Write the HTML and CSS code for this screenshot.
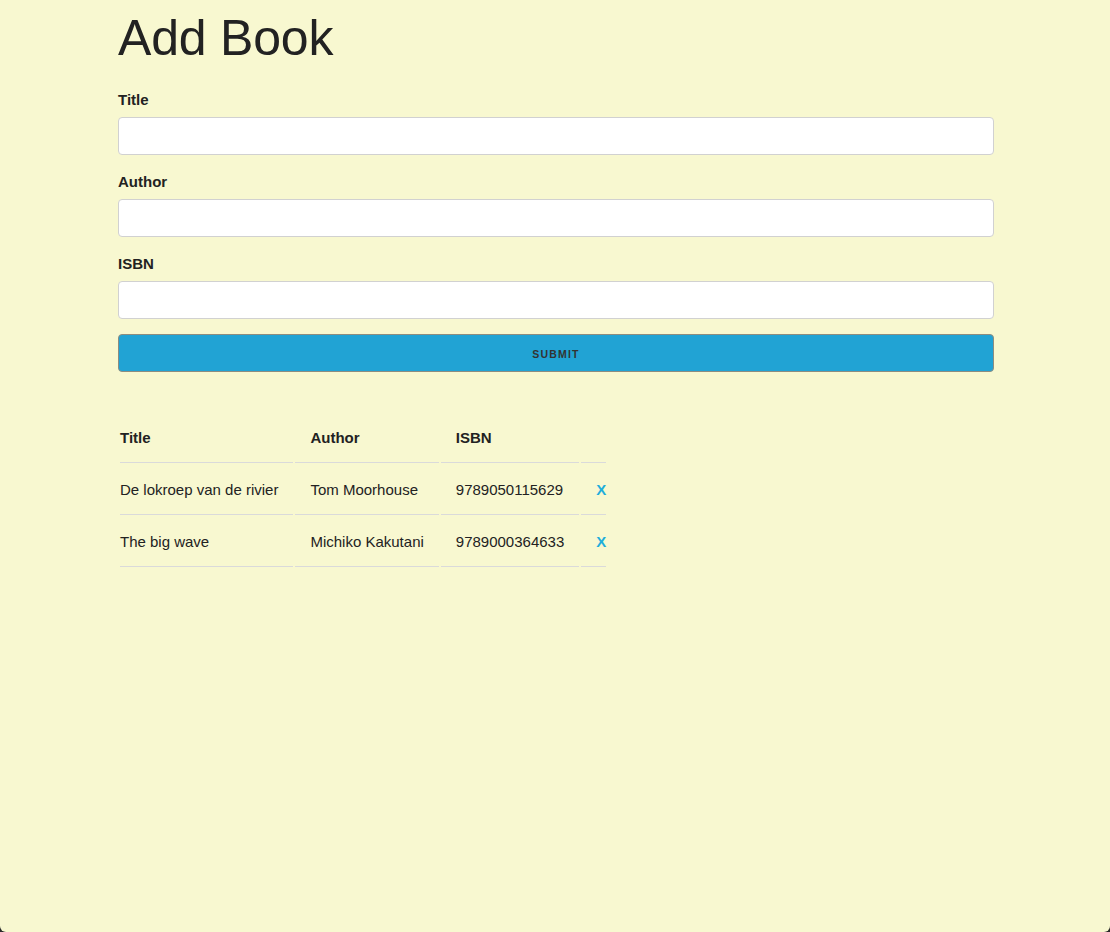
FILE: index.html
```html
<!DOCTYPE html>
<html lang="en">
<head>
<meta charset="utf-8">
<title>Add Book</title>
<link rel="stylesheet" href="styles.css">
</head>
<body>
<div class="container">
  <h1 class="title">Add Book</h1>
  <form class="book-form">
    <label class="field-label" for="title">Title</label>
    <input class="field-input" type="text" id="title">
    <label class="field-label" for="author">Author</label>
    <input class="field-input" type="text" id="author">
    <label class="field-label" for="isbn">ISBN</label>
    <input class="field-input" type="text" id="isbn">
    <button class="submit-btn" type="submit">Submit</button>
  </form>
  <table class="book-table">
    <thead>
      <tr><th>Title</th><th>Author</th><th>ISBN</th><th></th></tr>
    </thead>
    <tbody>
      <tr><td>De lokroep van de rivier</td><td>Tom Moorhouse</td><td>9789050115629</td><td><a class="delete" href="#">X</a></td></tr>
      <tr><td>The big wave</td><td>Michiko Kakutani</td><td>9789000364633</td><td><a class="delete" href="#">X</a></td></tr>
    </tbody>
  </table>
</div>
</body>
</html>
```
FILE: styles.css
```css
html {
  background: #2a2a2a;
}
body {
  margin: 0;
  min-height: 100vh;
  background: #f8f8d0;
  border-radius: 0 0 6px 6px;
  font-family: "Liberation Sans", Arial, sans-serif;
  font-size: 15px;
  line-height: 1.6;
  color: #222;
}
.container {
  width: 876px;
  margin: 0 auto;
  padding: 8px 0 0 2px;
}
.title {
  margin: 0 0 20px;
  font-size: 50px;
  line-height: 60px;
  font-weight: 400;
  letter-spacing: -0.2px;
  color: #222;
}
.book-form {
  display: flex;
  flex-direction: column;
}
.field-label {
  display: block;
  font-weight: 700;
  font-size: 15px;
  line-height: 24px;
  margin-bottom: 5px;
}
.field-input {
  box-sizing: border-box;
  height: 38px;
  width: 100%;
  margin: 0 0 15px;
  padding: 6px 10px;
  background: #fff;
  border: 1px solid #d1d1d1;
  border-radius: 4px;
  font: inherit;
}
.submit-btn {
  box-sizing: border-box;
  height: 38px;
  width: 100%;
  margin: 0;
  background: #21a3d4;
  border: 1px solid #8d8d80;
  border-radius: 4px;
  color: #333;
  font-family: "Liberation Sans", Arial, sans-serif;
  font-size: 10.5px;
  font-weight: 700;
  letter-spacing: 1.2px;
  text-transform: uppercase;
  line-height: 36px;
}
.book-table {
  margin-top: 39px;
  border-spacing: 2px;
  font-size: 15px;
}
.book-table th,
.book-table td {
  text-align: left;
  padding: 12px 15px;
  line-height: 25px;
  border-bottom: 1px solid #dadada;
  white-space: nowrap;
}
.book-table th {
  font-weight: 700;
}
.book-table th:first-child,
.book-table td:first-child {
  padding-left: 0;
}
.book-table th:last-child,
.book-table td:last-child {
  padding-right: 0;
}
.delete {
  color: #1eaedb;
  font-weight: 700;
  text-decoration: none;
}
```
